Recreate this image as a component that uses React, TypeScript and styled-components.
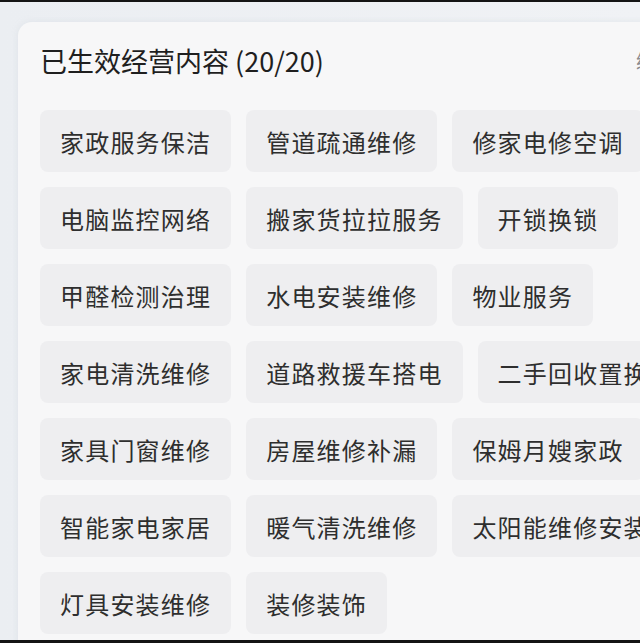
import React from 'react'
import styled, { createGlobalStyle } from 'styled-components'

const GlobalStyle = createGlobalStyle`
  html, body {
    margin: 0;
    padding: 0;
    height: 643px;
    overflow: hidden;
    background: #111;
  }
  #root {
    height: 643px;
  }
`

const Screen = styled.div`
  height: 643px;
  display: flex;
  flex-direction: column;
  font-family: 'Noto Sans CJK SC', 'Noto Sans', sans-serif;
`

const EdgeBar = styled.div<{ $h: number }>`
  height: ${(p) => p.$h}px;
  flex-shrink: 0;
  background: #141414;
`

const Page = styled.div`
  flex: 1;
  overflow: hidden;
  background: linear-gradient(90deg, #ebeef2 0%, #f0f2f5 100%);
  padding: 20px 0 0 18px;
`

// the card runs past the right edge of the screenshot, so it is wider than the view
const Card = styled.section`
  width: 680px;
  min-height: 700px;
  box-sizing: border-box;
  background: #f7f7f8;
  border-radius: 14px;
  padding: 20px 22px 0 22px;
  box-shadow: 0 0 6px rgba(200, 205, 215, 0.35);
`

const Header = styled.div`
  display: flex;
  align-items: center;
  justify-content: space-between;
  height: 36px;
`

const Title = styled.h3`
  margin: 0;
  font-size: 27px;
  font-weight: 400;
  color: #1f1f1f;
`

const Action = styled.span`
  font-size: 20px;
  color: #8a8a8e;
`

const ChipList = styled.div`
  margin-top: 32px;
  display: flex;
  flex-wrap: wrap;
  gap: 15px 15px;
`

const Chip = styled.div`
  height: 62px;
  padding: 0 20px;
  display: flex;
  align-items: center;
  background: #eeeef0;
  border-radius: 8px;
  font-size: 24px;
  letter-spacing: 1.2px;
  color: #2e2e2e;
  white-space: nowrap;
`

const services = [
  '家政服务保洁',
  '管道疏通维修',
  '修家电修空调',
  '电脑监控网络',
  '搬家货拉拉服务',
  '开锁换锁',
  '甲醛检测治理',
  '水电安装维修',
  '物业服务',
  '家电清洗维修',
  '道路救援车搭电',
  '二手回收置换',
  '家具门窗维修',
  '房屋维修补漏',
  '保姆月嫂家政',
  '智能家电家居',
  '暖气清洗维修',
  '太阳能维修安装',
  '灯具安装维修',
  '装修装饰',
]

export default function App() {
  return (
    <>
      <GlobalStyle />
      <Screen>
        <EdgeBar $h={2} />
        <Page>
          <Card>
            <Header>
              <Title>已生效经营内容 (20/20)</Title>
              <Action>编辑</Action>
            </Header>
            <ChipList>
              {services.map((s) => (
                <Chip key={s}>{s}</Chip>
              ))}
            </ChipList>
          </Card>
        </Page>
        <EdgeBar $h={3} />
      </Screen>
    </>
  )
}
